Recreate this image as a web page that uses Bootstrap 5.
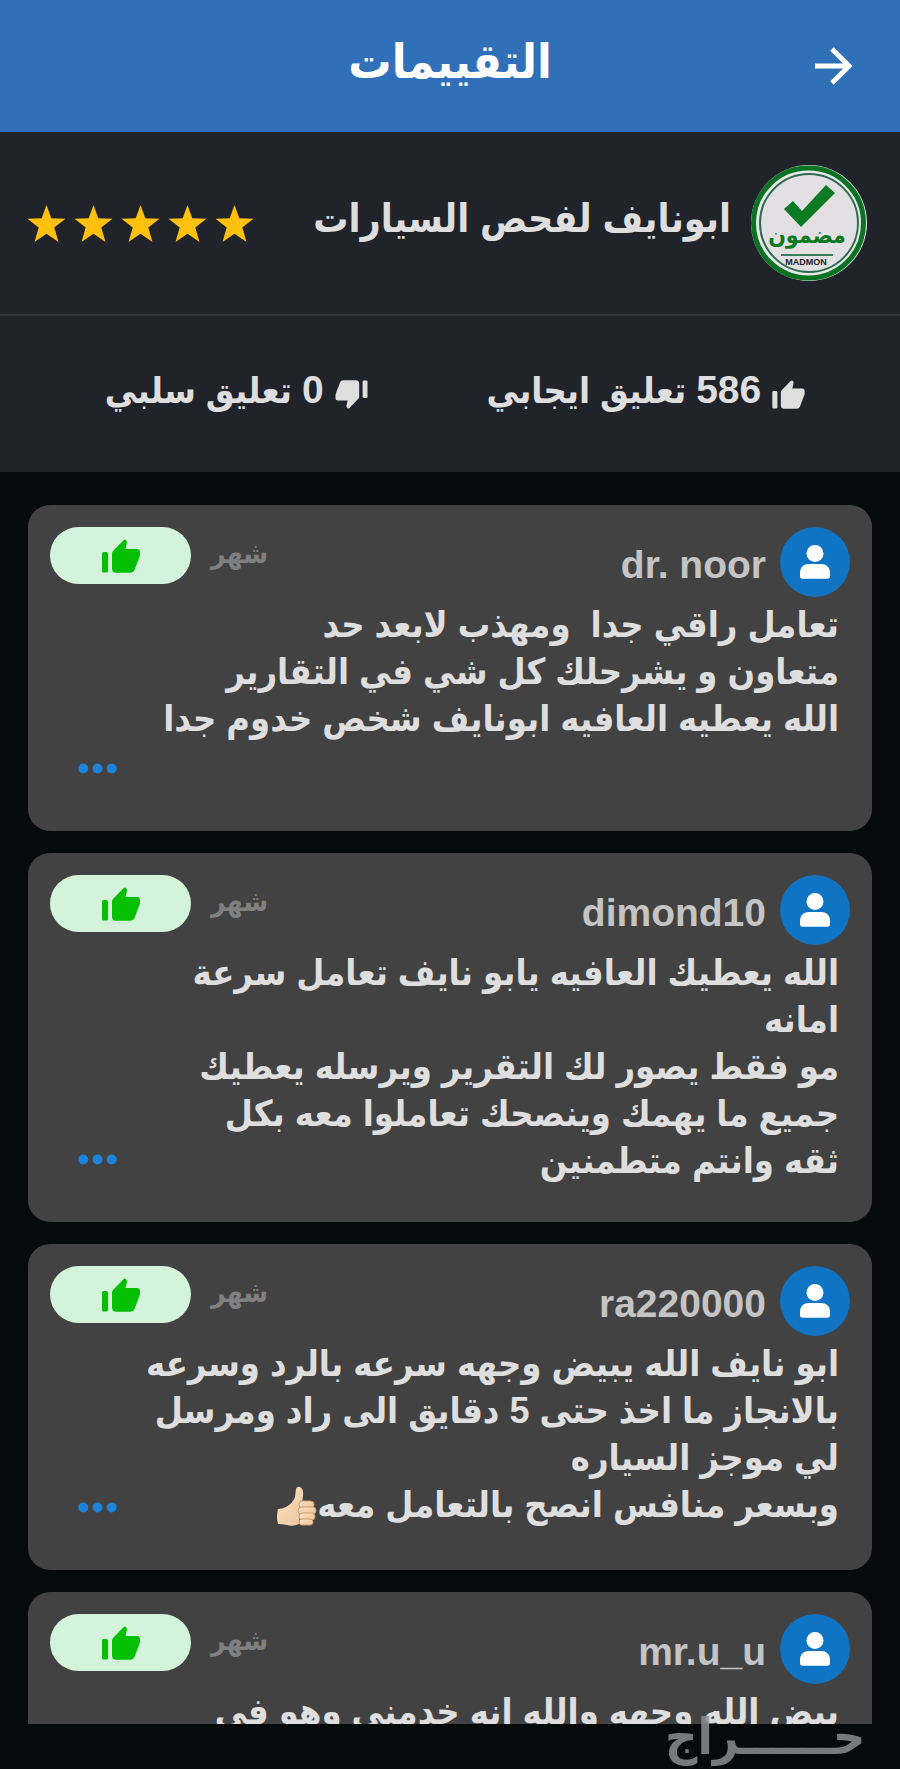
<!DOCTYPE html>
<html lang="ar" dir="rtl">
<head>
<meta charset="utf-8">
<meta name="viewport" content="width=device-width, initial-scale=1">
<title>التقييمات</title>
<link rel="stylesheet" href="https://cdn.jsdelivr.net/npm/bootstrap@5.3.0/dist/css/bootstrap.min.css">
<style>
  body { background: #060a0a; color: #dedede; font-family: "Liberation Sans", "DejaVu Sans Condensed", "DejaVu Sans", sans-serif; font-weight: 700; }
  .topbar { background: #3070b9; height: 132px; padding: 0 44px; color: #fff; }
  .topbar h1 { font-size: 48px; line-height: 60px; padding-bottom: 8px; }
  .bar-side { width: 44px; }
  .panel { background: #21232b; }
  .owner { height: 184px; gap: 19px; border-bottom: 2px solid #33353d; padding: 0 32px 0 27px; }
  .owner-name { font-size: 39px; line-height: 56px; padding-bottom: 8px; }
  .stats { height: 156px; font-size: 36px; padding-left: 10px; }
  .stat { gap: 11px; }
  .num { font-size: 39px; }
  .feed { min-height: 0; padding: 33px 28px 0; gap: 22px; overflow-y: auto; scrollbar-width: none; }
  .feed::-webkit-scrollbar { display: none; }
  .review { background: #424242; border-radius: 22px; padding: 22px 22px 38px; }
  .review-head { height: 74px; }
  .face { width: 70px; height: 70px; background: #0f74c4; }
  .user { color: #c4c4c4; font-size: 39px; line-height: 76px; padding: 0 14px; }
  .ago { color: #808080; font-size: 28px; line-height: 54px; padding: 0 20px; }
  .vote { width: 141px; height: 57px; background: #d3f4da; }
  .words { font-size: 36px; line-height: 47px; min-height: 192px; min-width: 0; padding-right: 11px; white-space: pre; }
  .hand { margin: 4px 0; }
  .more { height: 50px; padding: 0 28px; }
  .bottombar { height: 45px; }
  .brand { left: 665px; bottom: 2px; color: #8b8d8f; opacity: .85; font-size: 50px; line-height: 60px; }
</style>
</head>
<body>
<svg class="d-none" aria-hidden="true">
  <symbol id="like" viewBox="0 0 38 34"><path d="M1.500 13h3a1.500 1.500 0 0 1 1.500 1.500v17.500a1.500 1.500 0 0 1-1.500 1.500h-3A1.500 1.500 0 0 1 0 32V14.500A1.500 1.500 0 0 1 1.500 13zM10 14.500q0-1.500 1-2.500L21.500 1.200Q22.700 0 23.900 1q1.400 1.300 1 3L23.500 10H35q3 0 3 3.500v3L32.500 31q-1 2.700-4 2.700H14Q10 33.700 10 29.500z"/></symbol>
  <symbol id="star" viewBox="0 0 38 37"><path d="M19 0l4.800 13.300L38 13.700 26.800 22.600 31 37 19 28.700 7 37l4.200-14.400L0 13.700l14.200-.4z"/></symbol>
  <symbol id="person" viewBox="0 0 30 34"><circle cx="15" cy="8.500" r="8.500"/><path d="M0 31v-3C0 22 4 19 9 19h12c5 0 9 3 9 9v3q0 2.700-2.700 2.700H2.700Q0 33.700 0 31z"/></symbol>
  <symbol id="dots" viewBox="0 0 39 11"><circle cx="5.300" cy="5.500" r="5"/><circle cx="19.500" cy="5.500" r="5"/><circle cx="33.700" cy="5.500" r="5"/></symbol>
</svg>
<div class="vh-100 d-flex flex-column overflow-hidden position-relative">
  <header class="topbar d-flex align-items-center flex-shrink-0">
    <button type="button" class="btn p-0 border-0 text-white bar-side" aria-label="رجوع"><svg width="38" height="38" viewBox="0 0 38 38" fill="none" stroke="currentColor" stroke-width="5"><path d="M0 19h34M17 2l17 17-17 17"/></svg></button>
    <h1 class="m-0 flex-fill text-center fw-bold">التقييمات</h1>
    <span class="bar-side"></span>
  </header>

  <section class="panel flex-shrink-0">
    <div class="owner d-flex align-items-center">
      <svg class="flex-shrink-0" width="118" height="118" viewBox="0 0 118 118" role="img" aria-label="مضمون MADMON">
        <circle cx="59" cy="59" r="58" fill="#e8e9e6"/>
        <circle cx="58.500" cy="59" r="55" fill="none" stroke="#0b7224" stroke-width="5"/>
        <circle cx="59" cy="59" r="49" fill="#e3e0e4" stroke="#2c6b51" stroke-width="2"/>
        <path d="M34 45l9-8 9 10 24-26 9 8-34 34z" fill="#0b7a22"/>
        <text x="57" y="79" text-anchor="middle" font-size="23" fill="#0b7a22">مضمون</text>
        <path d="M31 91h52" stroke="#3a7d5c" stroke-width="2"/>
        <text x="56" y="101" text-anchor="middle" font-size="9" fill="#222" direction="ltr">MADMON</text>
      </svg>
      <h2 class="owner-name m-0 fw-bold flex-fill">ابونايف لفحص السيارات</h2>
      <div class="d-flex gap-2" role="img" aria-label="5 / 5">
        <svg width="39" height="37" fill="#ffc10d"><use href="#star"/></svg>
        <svg width="39" height="37" fill="#ffc10d"><use href="#star"/></svg>
        <svg width="39" height="37" fill="#ffc10d"><use href="#star"/></svg>
        <svg width="39" height="37" fill="#ffc10d"><use href="#star"/></svg>
        <svg width="39" height="37" fill="#ffc10d"><use href="#star"/></svg>
      </div>
    </div>
    <div class="stats d-flex align-items-center justify-content-evenly gap-4">
      <div class="stat d-flex align-items-center"><svg width="33" height="29" fill="#dedede"><use href="#like"/></svg><span class="pb-2"><span class="num">586</span> تعليق ايجابي</span></div>
      <div class="stat d-flex align-items-center"><svg width="33" height="29" viewBox="0 0 38 34" fill="#dedede"><use href="#like" width="38" height="34" transform="rotate(180 19 17)"/></svg><span class="pb-2"><span class="num">0</span> تعليق سلبي</span></div>
    </div>
  </section>

  <main class="feed flex-fill d-flex flex-column">
    <article class="review flex-shrink-0">
      <div class="review-head d-flex align-items-start">
        <span class="face rounded-circle d-flex align-items-center justify-content-center"><svg width="30" height="34" fill="#fff"><use href="#person"/></svg></span>
        <a href="#" class="user text-decoration-none" dir="ltr">dr. noor</a>
        <span class="flex-fill"></span>
        <time class="ago">شهر</time>
        <span class="vote rounded-pill d-flex align-items-center justify-content-center"><svg width="38" height="34" fill="#04bf04"><use href="#like"/></svg></span>
      </div>
      <div class="d-flex justify-content-between align-items-end">
        <p class="words m-0">تعامل راقي جدا  ومهذب لابعد حد
متعاون و يشرحلك كل شي في التقارير
الله يعطيه العافيه ابونايف شخص خدوم جدا</p>
        <button type="button" class="btn border-0 more d-flex align-items-center flex-shrink-0" aria-label="المزيد"><svg width="39" height="11" fill="#1c83da"><use href="#dots"/></svg></button>
      </div>
    </article>

    <article class="review flex-shrink-0">
      <div class="review-head d-flex align-items-start">
        <span class="face rounded-circle d-flex align-items-center justify-content-center"><svg width="30" height="34" fill="#fff"><use href="#person"/></svg></span>
        <a href="#" class="user text-decoration-none" dir="ltr">dimond10</a>
        <span class="flex-fill"></span>
        <time class="ago">شهر</time>
        <span class="vote rounded-pill d-flex align-items-center justify-content-center"><svg width="38" height="34" fill="#04bf04"><use href="#like"/></svg></span>
      </div>
      <div class="d-flex justify-content-between align-items-end">
        <p class="words m-0">الله يعطيك العافيه يابو نايف تعامل سرعة
امانه
مو فقط يصور لك التقرير ويرسله يعطيك
جميع ما يهمك وينصحك تعاملوا معه بكل
ثقه وانتم متطمنين</p>
        <button type="button" class="btn border-0 more d-flex align-items-center flex-shrink-0" aria-label="المزيد"><svg width="39" height="11" fill="#1c83da"><use href="#dots"/></svg></button>
      </div>
    </article>

    <article class="review flex-shrink-0">
      <div class="review-head d-flex align-items-start">
        <span class="face rounded-circle d-flex align-items-center justify-content-center"><svg width="30" height="34" fill="#fff"><use href="#person"/></svg></span>
        <a href="#" class="user text-decoration-none" dir="ltr">ra220000</a>
        <span class="flex-fill"></span>
        <time class="ago">شهر</time>
        <span class="vote rounded-pill d-flex align-items-center justify-content-center"><svg width="38" height="34" fill="#04bf04"><use href="#like"/></svg></span>
      </div>
      <div class="d-flex justify-content-between align-items-end">
        <p class="words m-0">ابو نايف الله يبيض وجهه سرعه بالرد وسرعه
بالانجاز ما اخذ حتى 5 دقايق الى راد ومرسل
لي موجز السياره
وبسعر منافس انصح بالتعامل معه<svg class="hand" width="40" height="42" viewBox="0 0 40 42" role="img" aria-label="👍🏻"><defs><linearGradient id="skin" x1="0" y1="0" x2="1" y2="1"><stop offset="0" stop-color="#fbe3c6"/><stop offset="1" stop-color="#eec49c"/></linearGradient></defs><path d="M1 23q4 0 8-2 7-4 9-10l1-8q1-3 4-2 4 2 3 9l-1 7h-3v21q-6 3-12 1-5-1-9-1-2-7 0-15z" fill="url(#skin)"/><g fill="url(#skin)" stroke="#cf9a6c" stroke-width="1"><rect x="22" y="15" width="15" height="7" rx="3.500"/><rect x="21" y="21" width="18" height="7" rx="3.500"/><rect x="22" y="27" width="16" height="7" rx="3.500"/><rect x="22" y="33" width="14" height="6" rx="3"/></g></svg></p>
        <button type="button" class="btn border-0 more d-flex align-items-center flex-shrink-0" aria-label="المزيد"><svg width="39" height="11" fill="#1c83da"><use href="#dots"/></svg></button>
      </div>
    </article>

    <article class="review flex-shrink-0">
      <div class="review-head d-flex align-items-start">
        <span class="face rounded-circle d-flex align-items-center justify-content-center"><svg width="30" height="34" fill="#fff"><use href="#person"/></svg></span>
        <a href="#" class="user text-decoration-none" dir="ltr">mr.u_u</a>
        <span class="flex-fill"></span>
        <time class="ago">شهر</time>
        <span class="vote rounded-pill d-flex align-items-center justify-content-center"><svg width="38" height="34" fill="#04bf04"><use href="#like"/></svg></span>
      </div>
      <p class="words m-0">بيض الله وجهه والله انه خدمني وهو في</p>
    </article>
  </main>
  <footer class="bottombar flex-shrink-0"></footer>
  <div class="brand position-absolute">حــــــراج</div>
</div>
<script src="https://cdn.jsdelivr.net/npm/bootstrap@5.3.0/dist/js/bootstrap.bundle.min.js"></script>
</body>
</html>
